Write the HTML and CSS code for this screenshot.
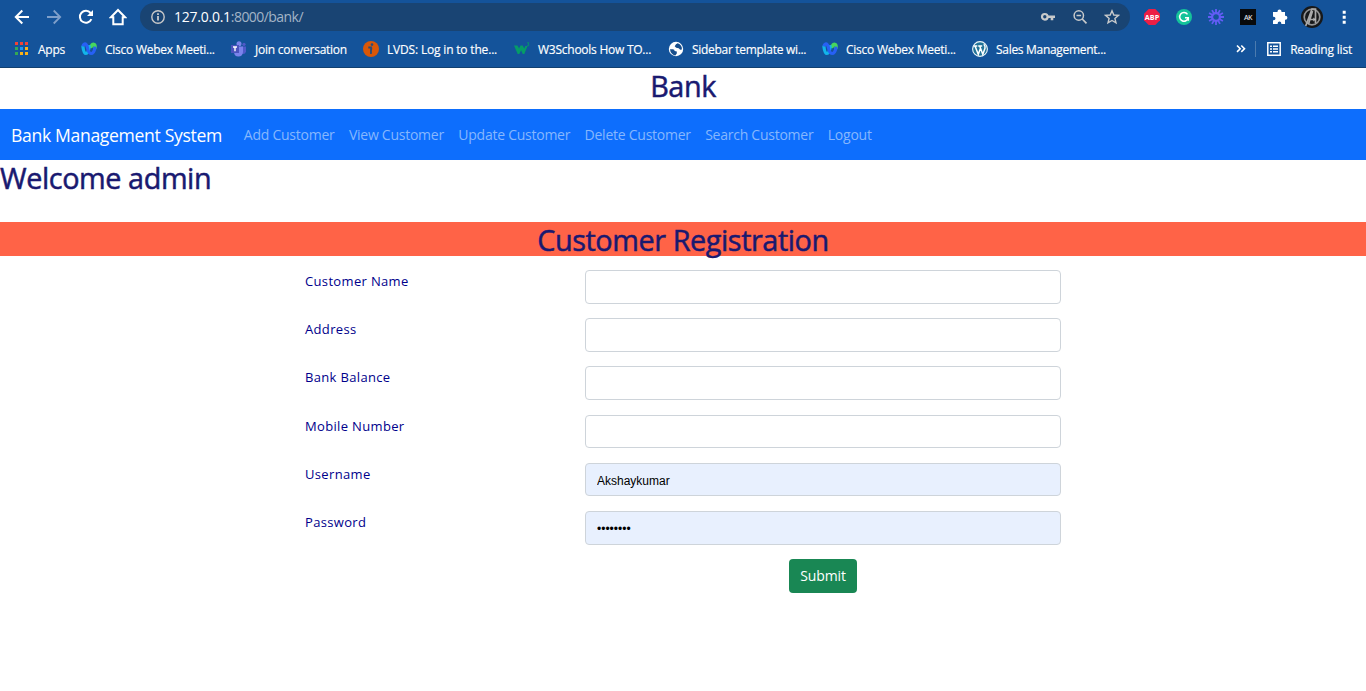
FILE: index.html
```html
<!DOCTYPE html>
<html lang="en">
<head>
<meta charset="utf-8">
<title>Bank</title>
<link rel="stylesheet" href="styles.css">
</head>
<body>
<svg class="defs" width="0" height="0">
  <symbol id="webex" viewBox="0 0 16 16">
    <path d="M10.200 5.500Q11.500 2.500 13.200 3.400Q14.600 4.500 13.900 7" fill="none" stroke="#46d75d" stroke-width="3.400" stroke-linecap="round"/>
    <path d="M1.900 5.500Q2.700 12.500 5 12.500Q7.200 12.500 8.300 5.500" fill="none" stroke="#12b5ea" stroke-width="3.200" stroke-linecap="round"/>
    <path d="M2.300 4Q4.800 1 6.300 6Q7.500 12.500 10 12.500Q13 12.500 13.900 7" fill="none" stroke="#2760f5" stroke-width="3.200" stroke-linecap="round"/>
  </symbol>
</svg>
<header class="browser">
  <div class="toolbar">
    <div class="controls">
      <svg width="16" height="16" viewBox="0 0 16 16"><path d="M15 8H2M8.3 1.5 1.8 8l6.5 6.5" fill="none" stroke="#fff" stroke-width="2"/></svg>
      <svg width="16" height="16" viewBox="0 0 16 16"><path d="M1 8h13M7.7 1.5 14.2 8l-6.5 6.5" fill="none" stroke="#7f9fca" stroke-width="1.8"/></svg>
      <svg width="16" height="16" viewBox="0 0 16 16"><path d="M13.4 10.2A6 6 0 1 1 12.6 4L14 5.4" fill="none" stroke="#fff" stroke-width="2"/><path d="M15 1v6H9z" fill="#fff"/></svg>
      <svg width="18" height="18" viewBox="0 0 18 18"><path d="M4.3 9.2v7h9.4v-7h2.4L9 2 1.9 9.2z" fill="none" stroke="#fff" stroke-width="2"/></svg>
    </div>
    <div class="address">
      <svg width="16" height="16" viewBox="0 0 16 16"><circle cx="8" cy="8" r="6.2" fill="none" stroke="#c8c8c8" stroke-width="1.4"/><path d="M8 7v4.5M8 4.3V6" stroke="#d2d2d2" stroke-width="1.7"/></svg>
      <span class="url"><b>127.0.0.1</b>:8000/bank/</span>
      <div class="address-tools">
        <svg width="16" height="16" viewBox="0 0 16 16"><circle cx="4.8" cy="7.8" r="2.8" fill="none" stroke="#c8cacb" stroke-width="2.2"/><path d="M7.5 7.8H15M12 8v3.2" stroke="#c8cacb" stroke-width="2.6"/></svg>
        <svg width="16" height="16" viewBox="0 0 16 16"><circle cx="6.8" cy="6.5" r="4.7" fill="none" stroke="#c8cacb" stroke-width="1.5"/><path d="M10.2 10l4.3 4.3M4.5 6.5h4.6" stroke="#c8cacb" stroke-width="1.7"/></svg>
        <svg width="16" height="16" viewBox="0 0 16 16"><path d="M8 1.8 9.8 6l4.6.4-3.5 3 1.1 4.5L8 11.500l-4 2.4 1.1-4.5-3.5-3L6.200 6z" fill="none" stroke="#c8cacb" stroke-width="1.4"/></svg>
      </div>
    </div>
    <div class="extensions">
      <svg width="16" height="16" viewBox="0 0 16 16"><path d="M4.700 0h6.600L16 4.700v6.600L11.300 16H4.700L0 11.300V4.700z" fill="#ed1e45"/><text x="8" y="10.800" class="abp">ABP</text></svg>
      <svg width="16" height="16" viewBox="0 0 16 16"><circle cx="8" cy="8" r="8" fill="#15c39a"/><path d="M11.500 5.400A4.300 4.300 0 1 0 12.200 8.700H9M12.300 8.500v3.300" fill="none" stroke="#fff" stroke-width="1.500"/></svg>
      <svg width="16" height="16" viewBox="0 0 16 16"><circle cx="8" cy="8" r="3.900" fill="none" stroke="#625df5" stroke-width="2.200"/><path d="M8 0v4M8 12v4M0 8h4M12 8h4M4 1.100l2 3.500M10 11.400l2 3.500M12 1.100l-2 3.500M6 11.400l-2 3.500M1.100 4l3.500 2M11.400 10l3.500 2M1.100 12l3.500-2M11.400 6l3.500-2" stroke="#625df5" stroke-width="1.800"/></svg>
      <svg width="16" height="16" viewBox="0 0 16 16"><path d="M0 0h16v16H0z" fill="#080a0c"/><text x="8" y="10.700" class="ak">AK</text></svg>
      <svg width="16" height="16" viewBox="0 0 16 16"><path d="M2 3h3.500V2.600a2 2 0 0 1 4 0V3H13v3.700h.4a2 2 0 0 1 0 4H13V15H9.300v-.7a1.800 1.800 0 0 0-3.600 0v.7H1v-3.800h.7a1.700 1.700 0 0 0 0-3.500H1V3z" fill="#fff"/></svg>
      <svg class="avatar" width="22" height="22" viewBox="0 0 22 22"><circle cx="11" cy="11" r="11" fill="#171819"/><circle cx="11" cy="11" r="7.800" fill="none" stroke="#929394" stroke-width="1.700"/><path d="M4.700 20 11 3h3.500v14M7.700 13.500h5M11.500 5 7.500 18" fill="none" stroke="#aaa" stroke-width="1.700"/><path d="M12.300 11.500v4l2.500-2z" fill="#bbb"/></svg>
      <svg width="16" height="16" viewBox="0 0 16 16"><path d="M6.700 1.800h3v3h-3zM6.700 6.800h3v3h-3zM6.700 11.800h3v3h-3z" fill="#fff"/></svg>
    </div>
  </div>
  <div class="bookmarks">
    <div class="bookmark">
      <svg width="16" height="16" viewBox="0 0 16 16"><path d="M1 1h3v3H1zM6 1h3v3H6zM11 1h3v3h-3z" fill="#f14336"/><path d="M1 6h3v3H1zM1 11h3v3H1z" fill="#34a853"/><path d="M6 6h3v3H6z" fill="#2196f3"/><path d="M11 6h3v3h-3zM6 11h3v3H6zM11 11h3v3h-3z" fill="#fbb117"/></svg>
      <span>Apps</span></div>
    <div class="bookmark"><svg width="16" height="16"><use href="#webex"/></svg><span>Cisco Webex Meeti...</span></div>
    <div class="bookmark">
      <svg width="16" height="16" viewBox="0 0 16 16"><circle cx="8" cy="2.700" r="2.500" fill="#7b83eb"/><circle cx="13" cy="3.300" r="1.600" fill="#5059c9"/><path d="M10.500 5.500H15v5q-.5 3-4 2.500z" fill="#5059c9"/><path d="M3 5.500h9V11q-.5 4.500-4.600 4.500T3 11z" fill="#7b83eb"/><path d="M0 4h8v8H0z" fill="#4b53bc"/><path d="M2 6h4M4 6v4.300" stroke="#fff" stroke-width="1.400"/></svg>
      <span>Join conversation</span></div>
    <div class="bookmark">
      <svg width="16" height="16" viewBox="0 0 16 16"><circle cx="8" cy="8" r="8" fill="#d95708"/><path d="M5.300 6.500h3.600M8.400 6.500q-.7 3-.4 6.300" fill="none" stroke="#274c79" stroke-width="1.900"/><circle cx="9" cy="3.600" r="1.300" fill="#274c79"/></svg>
      <span class="t-lvds">LVDS: Log in to the...</span></div>
    <div class="bookmark">
      <svg width="16" height="16" viewBox="0 0 16 16"><path d="M0 4.500h3.400l1.700 3 1.400-3h2.200l1.500 3 1.200-2.500h2.100L10.300 13H8.700L7.100 9.200 5.300 13H3.700z" fill="#059c67"/><path d="M13 1.800h2l-1 1.300q1.500.4.7 1.500-.7.500-1.700 0" fill="none" stroke="#059c67" stroke-width=".8"/></svg>
      <span>W3Schools How TO...</span></div>
    <div class="bookmark">
      <svg width="16" height="16" viewBox="0 0 16 16"><circle cx="8" cy="8" r="7.200" fill="#fff"/><path d="M2 8.200h2.800q2 .2 1.800 1.800l2.200.4v2.200l-1.500 1.900Q2.500 13.300 2 8.200M9.700 2.200 8 3.300 6.700 5.200l1.500 1.500 2.500.5 1.500 1.600 1.700-.2Q14.300 4 9.700 2.200" fill="#174e8c"/></svg>
      <span class="t-side">Sidebar template wi...</span></div>
    <div class="bookmark"><svg width="16" height="16"><use href="#webex"/></svg><span>Cisco Webex Meeti...</span></div>
    <div class="bookmark">
      <svg width="16" height="16" viewBox="0 0 16 16"><circle cx="8" cy="8" r="7.400" fill="#227398" stroke="#edf5f8" stroke-width="1.100"/><path d="M1.800 5h3.500M6.200 5h4M3 5l3.300 8.300L8.600 7M7.700 5l3.100 8.300L13 7.300Q13.500 5 11.800 3.200" fill="none" stroke="#fff" stroke-width="1.500"/></svg>
      <span class="t-side">Sales Management...</span></div>
    <div class="reading">
      <svg width="10" height="10" viewBox="0 0 10 10"><path d="m1 1.500 3.200 3.200L1 7.900M5.300 1.500l3.200 3.200-3.200 3.200" fill="none" stroke="#fff" stroke-width="1.600"/></svg>
      <i class="divider"></i>
      <svg width="14" height="14" viewBox="0 0 14 14"><path d="M.8.800h12.400v12.400H.8z" fill="none" stroke="#fff" stroke-width="1.500"/><path d="M3 4.200h2M6 4.200h5M3 7h2M6 7h5M3 9.800h2M6 9.800h5" stroke="#fff" stroke-width="1.400"/></svg>
      <span class="t-reading">Reading list</span>
    </div>
  </div>
</header>
<main>
  <h1 class="title">Bank</h1>
  <nav class="navbar">
    <span class="brand">Bank Management System</span>
    <a>Add Customer</a><a>View Customer</a><a>Update Customer</a><a>Delete Customer</a><a>Search Customer</a><a>Logout</a>
  </nav>
  <h1 class="welcome">Welcome admin</h1>
  <h1 class="banner">Customer Registration</h1>
  <form class="form">
    <div class="row"><label>Customer Name</label><input type="text"></div>
    <div class="row"><label>Address</label><input type="text"></div>
    <div class="row"><label>Bank Balance</label><input type="text"></div>
    <div class="row"><label>Mobile Number</label><input type="text"></div>
    <div class="row"><label>Username</label><input type="text" class="filled" value="Akshaykumar"></div>
    <div class="row"><label>Password</label><input type="password" class="filled" value="password"></div>
    <div class="actions"><button type="button">Submit</button></div>
  </form>
</main>
</body>
</html>
```
FILE: styles.css
```css
* { box-sizing: border-box; }
body { margin: 0; background: #fff; font-family: "Open Sans", "Noto Sans", sans-serif; overflow: hidden; }
svg { display: block; flex: none; }
.defs { position: absolute; }

.browser { height: 68px; background: #14539a; border-bottom: 1px solid #12406f; color: #fff; }
.toolbar { display: flex; height: 34px; align-items: center; }
.controls { display: flex; width: 140px; gap: 16px; padding-left: 14px; align-items: center; }
.controls svg:last-child { margin-left: -1px; }
.address { display: flex; align-items: center; width: 990px; height: 28px; padding: 0 10px; border-radius: 14px; background: #194473; }
.url { margin-left: 8px; font-size: 14px; line-height: 18px; padding-bottom: 1px; letter-spacing: -0.55px; color: #a3b4c7; }
.url b { font-weight: 400; color: #fff; letter-spacing: -0.25px; }
.address-tools { display: flex; gap: 16px; margin-left: auto; }
.extensions { display: flex; gap: 16px; margin-left: 14px; align-items: center; }
.avatar { margin: 0 -3px; }
.abp { font: 700 7.2px "Open Sans", sans-serif; fill: #fff; text-anchor: middle; }
.ak { font: 600 7px "Open Sans", sans-serif; fill: #ddd; text-anchor: middle; letter-spacing: -0.6px; }

.bookmarks { display: grid; grid-template-columns: 67px 150px 132px 151px 154px 154px 150px 1fr auto; height: 30px; padding: 0 14px; align-items: center; font-size: 12px; white-space: nowrap; }
.bookmark { display: flex; gap: 8px; align-items: center; }
.reading { display: flex; align-items: center; }
.divider { width: 1px; height: 16px; margin: 0 11px 0 9px; background: #4c7bae; }
.t-reading { margin-left: 9px; }
.bookmark span, .reading span { letter-spacing: -0.25px; -webkit-text-stroke: 0.15px #fff; }
.bookmark .t-lvds { letter-spacing: -0.18px; }
.bookmark .t-side { letter-spacing: -0.3px; }
.reading .t-reading { letter-spacing: -0.2px; }

h1 { margin: 0; font-size: 28.8px; font-weight: 500; line-height: 34px; letter-spacing: -0.42px; color: #191970; -webkit-text-stroke: 0.5px #191970; }
.title { height: 41px; padding-top: 1px; text-align: center; }
.navbar { display: flex; gap: 14.4px; height: 51px; padding: 0 11px; align-items: center; background: #0d6efd; font-size: 14px; letter-spacing: -0.25px; color: #86b7fe; white-space: nowrap; }
.brand { margin-right: 7.5px; font-size: 17.6px; letter-spacing: -0.34px; color: #fff; }
.welcome { height: 62px; padding-top: 1px; }
.banner { height: 34px; padding-top: 1px; background: #ff6347; text-align: center; }

.form { width: 756px; margin: 14.12px auto 0; }
.row { display: grid; grid-template-columns: 280px 476px; height: 33.75px; margin-bottom: 14.4px; }
label { font-size: 13px; line-height: 22px; letter-spacing: 0.34px; color: #00008b; }
input { width: 476px; height: 33.75px; padding: 7px 11px 5px; border: 1px solid #ced4da; border-radius: 4px; background: #fff; font: 12px "Liberation Sans", Arial, sans-serif; color: #000; outline: 0; }
.filled { background: #e8f0fe; }
.actions { display: flex; justify-content: center; margin-left: 280px; }
button { width: 68px; height: 34px; padding: 0 0 1px; border: 0; border-radius: 4px; background: #198754; font: 14px "Open Sans", sans-serif; letter-spacing: -0.1px; color: #fff; }
```
